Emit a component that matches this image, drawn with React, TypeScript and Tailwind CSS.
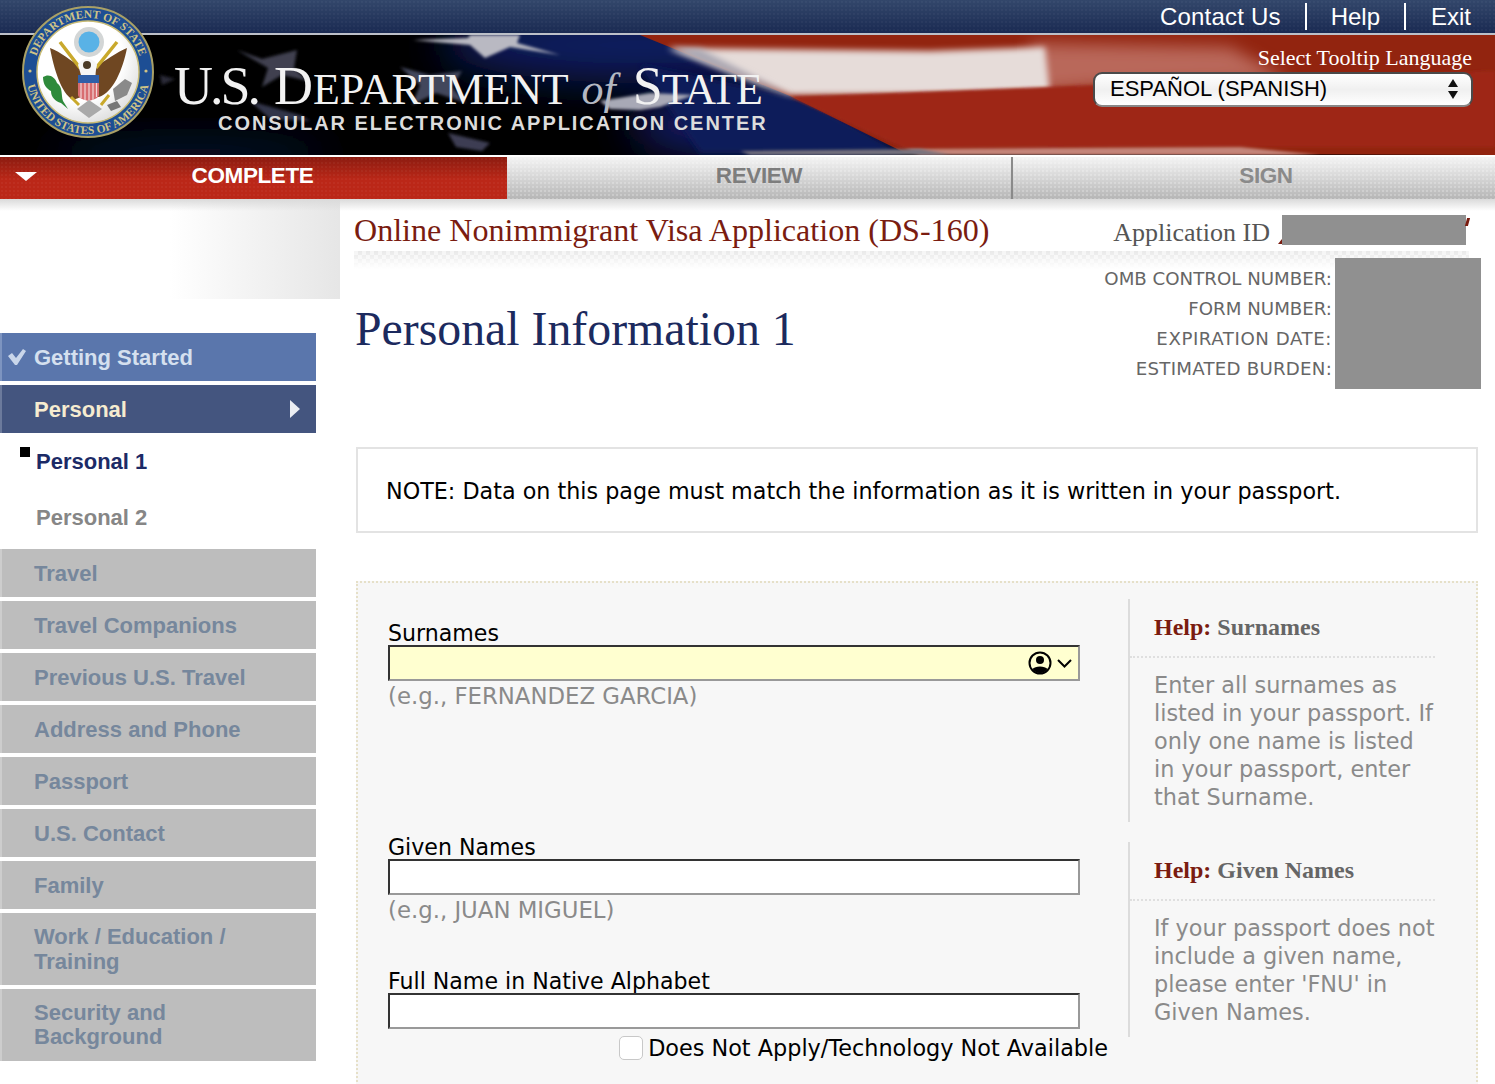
import React from "react"

const sans = "font-['Liberation_Sans',Arial,sans-serif]"
const serif = "font-['Liberation_Serif','Times_New_Roman',serif]"
const verdana = "font-['DejaVu_Sans',Verdana,sans-serif]"

function FlagBackground() {
    return (
        <svg className="absolute inset-0 w-full h-full" viewBox="0 0 1495 120" preserveAspectRatio="none">
            <defs>
                <filter id="blur20" x="-30%" y="-80%" width="160%" height="260%">
                    <feGaussianBlur stdDeviation="20" />
                </filter>
                <filter id="blur8" x="-20%" y="-60%" width="140%" height="220%">
                    <feGaussianBlur stdDeviation="8" />
                </filter>
                <filter id="blur3" x="-20%" y="-50%" width="140%" height="200%">
                    <feGaussianBlur stdDeviation="3" />
                </filter>
                <filter id="blur1" x="-20%" y="-50%" width="140%" height="200%">
                    <feGaussianBlur stdDeviation="1.4" />
                </filter>
            </defs>
            <rect width="1495" height="120" fill="#000" />
            {/* blue field, brightest around the end of the title */}
            <ellipse cx="640" cy="10" rx="200" ry="38" fill="#0e1a5e" filter="url(#blur20)" />
            <ellipse cx="760" cy="90" rx="130" ry="34" fill="#121c66" filter="url(#blur20)" />
            <ellipse cx="190" cy="120" rx="140" ry="14" fill="#0a1238" filter="url(#blur20)" />
            <path d="M640 30 L800 62 L905 118 L700 118 Z" fill="#0f1a5a" filter="url(#blur3)" />
            {/* stripes */}
            <path d="M640 0 L1495 0 L1495 120 L905 118 L790 61 Z" fill="#92240f" />
            <path d="M1030 8 L1230 12 L1290 45 L1100 52 L1030 58 Z" fill="#b9685a" filter="url(#blur8)" />
            <path d="M668 13 L930 16 L1045 12 L1050 59 L790 60 Z" fill="#e6dcd9" filter="url(#blur3)" />
            <path d="M668 13 L700 14 L790 60 L760 50 Z" fill="#a9a7b3" filter="url(#blur3)" />
            <path d="M790 62 L1095 50 L1495 36 L1495 112 L1100 112 L905 113 Z" fill="#9e2819" filter="url(#blur1)" />
            <path d="M905 114 L1240 112 L1320 120 L920 120 Z" fill="#c4857a" filter="url(#blur1)" />
            <path d="M740 116 L920 114 L950 120 L750 120 Z" fill="#77737f" filter="url(#blur1)" />
            {/* stars */}
            <g filter="url(#blur1)">
                <path d="M413 5 L468 3 L470 0 L520 0 L517 8 L560 20 L510 12 L485 23 L470 10 Z" fill="#b9b9c2" />
                <path d="M237 15 L262 24 L297 15 L294 33 L308 46 L282 40 L262 52 L268 33 Z" fill="#3f4150" />
                <path d="M400 32 L430 40 L462 36 L452 52 L466 68 L436 58 L412 70 L420 50 Z" fill="#43465c" />
                <path d="M600 66 L650 58 L694 60 L660 72 L640 75 L610 74 Z" fill="#a8a9b6" />
                <path d="M448 98 L490 108 L482 116 L456 112 Z" fill="#3c3e52" />
                <path d="M250 66 L300 80 L310 86 L270 84 Z" fill="#33354a" />
                <path d="M160 40 L175 44 L162 50 Z" fill="#2c2c38" />
            </g>
        </svg>
    )
}

function Seal() {
    return (
        <svg width="134" height="134" viewBox="0 0 134 134" className="absolute left-[21px] top-[5px]">
            <defs>
                <path id="sealTop" d="M 13 67 A 54 54 0 0 1 121 67" />
                <path id="sealBottom" d="M 5 67 A 62 62 0 0 0 129 67" />
                <radialGradient id="sealBody" cx="0.4" cy="0.35" r="0.8">
                    <stop offset="0.55" stopColor="#ffffff" />
                    <stop offset="1" stopColor="#cfcfcf" />
                </radialGradient>
            </defs>
            <circle cx="67" cy="67" r="65" fill="#1d4e94" stroke="#a9a066" strokeWidth="2" />
            <circle cx="67" cy="67" r="51" fill="url(#sealBody)" stroke="#c9bb73" strokeWidth="1.5" />
            <text fontSize="11.5" fill="#cfc386" fontFamily="Liberation Serif, serif" fontWeight="700" textAnchor="middle">
                <textPath href="#sealTop" startOffset="50%">DEPARTMENT OF STATE</textPath>
            </text>
            <text fontSize="11.5" fill="#cfc386" fontFamily="Liberation Serif, serif" fontWeight="700" textAnchor="middle">
                <textPath href="#sealBottom" startOffset="50%">UNITED STATES OF AMERICA</textPath>
            </text>
            <circle cx="9" cy="66" r="1.6" fill="#cfc386" />
            <circle cx="125" cy="66" r="1.6" fill="#cfc386" />
            {/* glory */}
            <circle cx="68" cy="37" r="15" fill="#d3d6d6" />
            <circle cx="68" cy="37" r="10.5" fill="#59b2e6" />
            {/* wings */}
            <path d="M52 95 C 40 88 33 64 29 43 C 40 47 50 56 60 62 L 60 92 Z" fill="#6f4722" />
            <path d="M78 92 C 92 88 102 64 106 43 C 96 47 84 56 74 62 L 76 92 Z" fill="#6f4722" />
            {/* arms */}
            <path d="M39 37 L59 63 M96 37 L75 63" stroke="#c9a92c" strokeWidth="3.5" />
            {/* head */}
            <path d="M57 60 C 60 52 73 52 76 60 L 74 70 L 60 70 Z" fill="#f6f6f6" />
            <circle cx="66" cy="60" r="4" fill="#4a3a26" />
            {/* shield */}
            <path d="M57 70 H78 V90 C 78 93 72 95 67.500 96 C 63 95 57 93 57 90 Z" fill="#d86d70" />
            <path d="M57 70 H78 V78 H57 Z" fill="#2f5fa8" />
            <path d="M60 78 V93 M64 78 V95 M68 78 V96 M72 78 V95 M75.500 78 V92" stroke="#f0d6d6" strokeWidth="1.2" />
            {/* olive and arrows */}
            <path d="M22 72 C 28 68 34 72 36 78 C 42 82 40 90 42 96 L 47 104 L 40 98 C 34 96 30 92 30 86 C 26 84 22 80 22 72 Z" fill="#2e8a3b" />
            <path d="M92 84 L 104 74 L 111 78 L 106 90 L 94 96 Z" fill="#8a8a8a" />
            <path d="M86 100 L 96 96 L 100 102 L 90 106 Z" fill="#777" />
            {/* talons, olive wreath below */}
            <path d="M50 92 L 58 100 M88 90 L 80 100" stroke="#c9a92c" strokeWidth="3" />
            <path d="M56 104 L 68 95 L 81 104 L 68 113 Z" fill="#a9a9a9" />
        </svg>
    )
}

function Header() {
    return (
        <header className="relative">
            <div className="h-[33px] flex justify-end items-center pr-[24px] text-white text-[24px] bg-[radial-gradient(rgba(255,255,255,0.03)_1px,transparent_1px),linear-gradient(to_bottom,#33476b,#1a2a52)] bg-[size:4px_4px,100%_100%]">
                <nav className={`${sans} flex items-center`}>
                    <a className="pr-[24px] border-r-2 border-white leading-[27px] tracking-[0.2px]">Contact Us</a>
                    <a className="px-[24px] border-r-2 border-white leading-[27px]">Help</a>
                    <a className="pl-[25px] leading-[27px]">Exit</a>
                </nav>
            </div>
            <div className="h-[2px] bg-[#bcc0c8]" />
            <div className="relative h-[120px] flex">
                <FlagBackground />
                <div className="relative pl-[174px] pt-[28px] text-white">
                    <div className={`${serif} flex items-baseline leading-[46px] text-[44px] whitespace-nowrap text-[#f2f2f2]`}>
                        <span className="text-[54px] tracking-[-3px]">U.S.</span>
                        <span className="text-[54px] ml-[16px]">D</span>
                        <span className="tracking-[-0.200px]">EPARTMENT</span>
                        <span className="italic ml-[13px] text-[#b4b8c2]">of</span>
                        <span className="text-[54px] ml-[17px] tracking-[-1px]">S</span>
                        <span className="tracking-[-1px]">TATE</span>
                    </div>
                    <div className={`${sans} -mt-[2px] font-bold text-[20px] leading-[24px] pl-[44px] tracking-[1.95px] whitespace-nowrap text-[#dcdcdc]`}>
                        CONSULAR ELECTRONIC APPLICATION CENTER
                    </div>
                </div>
                <div className="relative ml-auto pr-[22px] pt-[10px] flex flex-col items-end">
                    <div className={`${serif} text-white text-[22px] leading-[26px] pr-[1px]`}>Select Tooltip Language</div>
                    <div className={`${sans} mt-[1px] w-[380px] h-[35px] rounded-[9px] border-2 border-[#4a4a4a] border-b-[#888] bg-gradient-to-b from-[#fff] via-[#f0f0f0] to-[#fff] flex items-center justify-between pl-[15px] pr-[12px] pb-[2px] text-[22px] text-black`}>
                        <span>ESPAÑOL (SPANISH)</span>
                        <svg width="12" height="22" viewBox="0 0 12 22">
                            <path d="M6 1 L11 9 L1 9 Z M6 21 L11 13 L1 13 Z" fill="#111" />
                        </svg>
                    </div>
                </div>
            </div>
            <div className="h-[2px] bg-white" />
            <div className={`${sans} flex h-[42px] font-bold text-[22.500px] tracking-[-0.4px]`}>
                <div className="relative w-[507px] flex items-center justify-center pb-[5px] pr-[2px] text-white bg-[radial-gradient(rgba(255,255,255,0.04)_1px,transparent_1px),linear-gradient(to_bottom,#8c1c10,#bb2718_55%)] bg-[size:4px_4px,100%_100%]">
                    <svg width="22" height="9" viewBox="0 0 22 9" className="absolute left-[15px] top-[15px]">
                        <path d="M0 0 H22 L11 9 Z" fill="#fff" />
                    </svg>
                    COMPLETE
                </div>
                <div className="w-[506px] flex items-center justify-center pb-[5px] text-[#7d7d7d] border-r-2 border-[#8a8a8a] bg-[radial-gradient(rgba(255,255,255,0.22)_1px,transparent_1px),linear-gradient(to_bottom,#f4f4f4,#b6b6b6)] bg-[size:4px_4px,100%_100%]">
                    REVIEW
                </div>
                <div className="flex-1 flex items-center justify-center pl-[24px] pb-[5px] text-[#8a8a8a] bg-[radial-gradient(rgba(255,255,255,0.22)_1px,transparent_1px),linear-gradient(to_bottom,#f4f4f4,#b6b6b6)] bg-[size:4px_4px,100%_100%]">
                    SIGN
                </div>
            </div>
            {/* soft shadow under the tabs */}
            <div className="absolute left-0 right-0 top-full h-[12px] bg-gradient-to-b from-[#dadada] to-transparent" />
        </header>
    )
}

const grayItems = [
    "Travel",
    "Travel Companions",
    "Previous U.S. Travel",
    "Address and Phone",
    "Passport",
    "U.S. Contact",
    "Family",
]

function Sidebar() {
    return (
        <aside className={`${sans} w-[340px] shrink-0 font-bold text-[22px]`}>
            <div className="h-[100px] bg-gradient-to-r from-white from-50% to-[#e6e6e6]" />
            <div className="w-[316px] mt-[34px] flex flex-col gap-[4px]">
                <div className="h-[48px] bg-[#5a76ac] border-l-2 border-[#7d94c0] flex items-center text-[#d5e0ef] relative pl-[32px]">
                    <svg width="20" height="18" viewBox="0 0 20 18" className="absolute left-[5px] top-[15px]">
                        <path d="M1 8 L5 5 L9 10 L16 1 L19 3 L10 17 L8 17 Z" fill="#c9d6ea" />
                    </svg>
                    Getting Started
                </div>
                <div className="h-[48px] bg-[#44557f] border-l-2 border-[#6c7a9c] flex items-center justify-between text-[#f6ecd0] pl-[32px] pr-[16px]">
                    Personal
                    <svg width="10" height="18" viewBox="0 0 10 18">
                        <path d="M0 0 L10 9 L0 18 Z" fill="#eceef3" />
                    </svg>
                </div>
                <div className="h-[48px] flex items-center pl-[36px] text-[#1c2a66] relative">
                    <span className="absolute left-[20px] top-[10px] w-[10px] h-[10px] bg-black" />
                    Personal 1
                </div>
                <div className="h-[56px] flex items-center pl-[36px] text-[#868686]">Personal 2</div>
                {grayItems.map((item) => (
                    <div key={item} className="h-[48px] bg-[#bdbdbd] border-l-2 border-[#cdcdcd] flex items-center pl-[32px] text-[#76879c]">
                        {item}
                    </div>
                ))}
                <div className="h-[72px] bg-[#bdbdbd] border-l-2 border-[#cdcdcd] flex items-center pl-[32px] text-[#76879c] leading-[25px]">
                    Work / Education /<br />Training
                </div>
                <div className="h-[72px] bg-[#bdbdbd] border-l-2 border-[#cdcdcd] flex items-center pl-[32px] text-[#76879c] leading-[24px]">
                    Security and<br />Background
                </div>
            </div>
        </aside>
    )
}

function Field({ label, hint, warn, className }: { label: string; hint?: string; warn?: boolean; className?: string }) {
    return (
        <div className={className}>
            <label className="block text-black text-[22.100px] leading-[24px]">{label}</label>
            <div className="relative w-[692px]">
                <input
                    className={`block w-[692px] h-[36px] border-2 border-t-[#333] border-l-[#333] border-r-[#999] border-b-[#999] ${warn ? "bg-[#ffffd0]" : "bg-white"}`}
                />
                {warn && (
                    <svg width="46" height="24" viewBox="0 0 46 24" className="absolute right-[6px] top-[6px]">
                        <circle cx="12" cy="12" r="10.500" fill="none" stroke="#000" strokeWidth="2" />
                        <circle cx="12" cy="9" r="4" fill="#000" />
                        <path d="M4.500 18 C 7 14.500 17 14.500 19.500 18 C 16 23.500 8 23.500 4.500 18 Z" fill="#000" />
                        <path d="M30 9 L36.500 15.500 L43 9" fill="none" stroke="#000" strokeWidth="2" />
                    </svg>
                )}
            </div>
            {hint && <p className="text-[#8a8a8a] text-[22.800px] leading-[30px]">{hint}</p>}
        </div>
    )
}

function HelpBox({ title, lines, className }: { title: string; lines: string[]; className?: string }) {
    return (
        <div className={`w-[307px] border-l-2 border-[#dcdcdc] ${className}`}>
            <h4 className={`${serif} font-bold text-[24px] leading-[28px] pl-[24px] pt-[14px] pb-[15px] border-b-2 border-dotted border-[#dfdfdf] text-[#666]`}>
                <span className="text-[#7a1c10]">Help:</span> {title}
            </h4>
            <p className="text-[#8a8a8a] text-[22.400px] leading-[28px] pl-[24px] pt-[13px]">
                {lines.map((l) => (
                    <span key={l} className="block whitespace-nowrap">{l}</span>
                ))}
            </p>
        </div>
    )
}

function Main() {
    return (
        <main className={`${verdana} flex-1 min-w-0 pt-[14px] pr-[17px]`}>
            <div className="pl-[14px] pr-[9px]">
                <div className="flex justify-between items-center h-[38px]">
                    <h1 className={`${serif} text-[#7a1c10] text-[32.100px] leading-[36px] mb-[4px]`}>Online Nonimmigrant Visa Application (DS-160)</h1>
                    <div className={`${serif} flex items-center text-[#555] text-[26px]`}>
                        <span>Application ID</span>
                        <span className="relative ml-[12px] w-[184px] h-[30px] bg-[#909090] mr-[3px] -mt-[4px]">
                            <span className="absolute -left-[4px] bottom-[1px] w-0 h-0 border-b-[5px] border-l-[4px] border-b-[#7a1c10] border-l-transparent" />
                            <span className="absolute -right-[3px] top-[3px] w-[3px] h-[8px] bg-[#7a1c10] skew-x-[-15deg]" />
                        </span>
                    </div>
                </div>
                <div className="h-[18px] bg-[linear-gradient(to_bottom,transparent,#ffffff),repeating-conic-gradient(#e9e9e9_0_25%,#f5f5f5_0_50%)] bg-[size:100%_100%,8px_8px]" />
            </div>
            <div className="flex justify-between -mt-[11px]">
                <h2 className={`${serif} pl-[15px] pt-[41px] text-[#1c2a5e] text-[47.800px] leading-[60px]`}>Personal Information 1</h2>
                <div className="flex -mr-[3px]">
                    <ul className="text-right text-[#666] text-[18.200px] leading-[30px] pt-[6px] pr-[3px]">
                        <li>OMB CONTROL NUMBER:</li>
                        <li>FORM NUMBER:</li>
                        <li className="tracking-[0.550px]">EXPIRATION DATE:</li>
                        <li className="tracking-[0.230px]">ESTIMATED BURDEN:</li>
                    </ul>
                    <div className="w-[146px] h-[131px] bg-[#909090]" />
                </div>
            </div>
            <div className="ml-[16px] mt-[58px] h-[86px] border-2 border-[#e3e3e3] flex items-center pl-[28px] pt-[4px] text-black text-[22.270px]">
                NOTE: Data on this page must match the information as it is written in your passport.
            </div>
            <section className="ml-[16px] mt-[48px] h-[520px] border-2 border-dotted border-[#e6e0c8] bg-[#f7f7f7] flex pl-[30px]">
                <div className="w-[740px] shrink-0 pt-[38px]">
                    <Field label="Surnames" hint="(e.g., FERNANDEZ GARCIA)" warn />
                    <Field className="mt-[124px]" label="Given Names" hint="(e.g., JUAN MIGUEL)" />
                    <Field className="mt-[44px]" label="Full Name in Native Alphabet" />
                    <label className="flex items-center justify-end w-[720px] mt-[6px] text-black text-[22.350px] leading-[26px] whitespace-nowrap">
                        <span className="w-[24px] h-[24px] rounded-[5px] bg-white border border-[#c8c8c8] mr-[5px] shrink-0" />
                        Does Not Apply/Technology Not Available
                    </label>
                </div>
                <div className="pt-[16px]">
                    <HelpBox
                        title="Surnames"
                        className="h-[223px]"
                        lines={["Enter all surnames as", "listed in your passport. If", "only one name is listed", "in your passport, enter", "that Surname."]}
                    />
                    <HelpBox
                        title="Given Names"
                        className="h-[195px] mt-[20px]"
                        lines={["If your passport does not", "include a given name,", "please enter 'FNU' in", "Given Names."]}
                    />
                </div>
            </section>
        </main>
    )
}

export default function App() {
    return (
        <div className="relative w-[1495px] h-[1084px] overflow-hidden bg-white">
            <Header />
            <div className="flex">
                <Sidebar />
                <Main />
            </div>
            <Seal />
        </div>
    )
}
